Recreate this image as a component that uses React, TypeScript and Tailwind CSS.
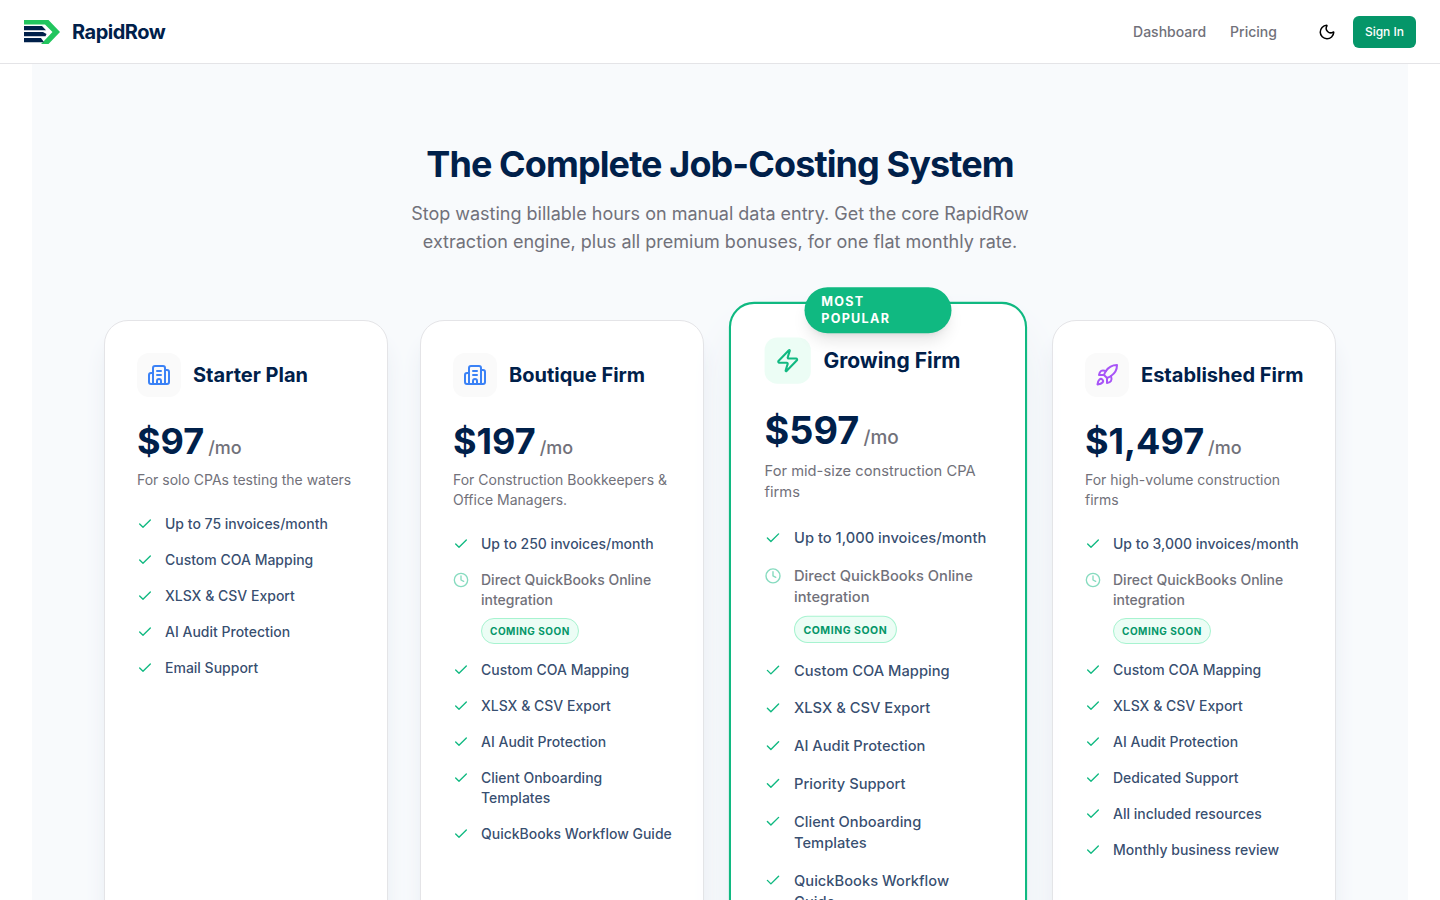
import { Building2, Check, Clock, Moon, Rocket, Zap, type LucideIcon } from 'lucide-react';
import clsx from 'clsx';

type Feature = { label: string; soon?: boolean };

type Plan = {
  name: string;
  price: string;
  description: string;
  icon: LucideIcon;
  iconClass: string;
  tileClass: string;
  popular?: boolean;
  features: Feature[];
};

const quickbooks: Feature = { label: 'Direct QuickBooks Online integration', soon: true };

const plans: Plan[] = [
  {
    name: 'Starter Plan',
    price: '$97',
    description: 'For solo CPAs testing the waters',
    icon: Building2,
    iconClass: 'text-[#3b82f6]',
    tileClass: 'bg-[#fafafa]',
    features: [
      { label: 'Up to 75 invoices/month' },
      { label: 'Custom COA Mapping' },
      { label: 'XLSX & CSV Export' },
      { label: 'AI Audit Protection' },
      { label: 'Email Support' },
    ],
  },
  {
    name: 'Boutique Firm',
    price: '$197',
    description: 'For Construction Bookkeepers & Office Managers.',
    icon: Building2,
    iconClass: 'text-[#3b82f6]',
    tileClass: 'bg-[#fafafa]',
    features: [
      { label: 'Up to 250 invoices/month' },
      quickbooks,
      { label: 'Custom COA Mapping' },
      { label: 'XLSX & CSV Export' },
      { label: 'AI Audit Protection' },
      { label: 'Client Onboarding Templates' },
      { label: 'QuickBooks Workflow Guide' },
    ],
  },
  {
    name: 'Growing Firm',
    price: '$597',
    description: 'For mid-size construction CPA firms',
    icon: Zap,
    iconClass: 'text-[#10b981]',
    tileClass: 'bg-[#ecfdf5]',
    popular: true,
    features: [
      { label: 'Up to 1,000 invoices/month' },
      quickbooks,
      { label: 'Custom COA Mapping' },
      { label: 'XLSX & CSV Export' },
      { label: 'AI Audit Protection' },
      { label: 'Priority Support' },
      { label: 'Client Onboarding Templates' },
      { label: 'QuickBooks Workflow Guide' },
    ],
  },
  {
    name: 'Established Firm',
    price: '$1,497',
    description: 'For high-volume construction firms',
    icon: Rocket,
    iconClass: 'text-[#a855f7]',
    tileClass: 'bg-[#fafafa]',
    features: [
      { label: 'Up to 3,000 invoices/month' },
      quickbooks,
      { label: 'Custom COA Mapping' },
      { label: 'XLSX & CSV Export' },
      { label: 'AI Audit Protection' },
      { label: 'Dedicated Support' },
      { label: 'All included resources' },
      { label: 'Monthly business review' },
    ],
  },
];

function Logo() {
  return (
    <svg width="36" height="24" viewBox="0 0 36 24" aria-hidden="true">
      <path d="M0 0h24.5L36 12 24.5 24H17l2.5-2.5L28.5 12 21 4.4H0z" fill="#22c55e" />
      <path d="M0 6h18l4 4.3H0z" fill="#00204a" />
      <path d="M0 12h19l3.5 2-1 2.3H0z" fill="#00204a" />
      <path d="M0 18h17l3 4.3H0z" fill="#00204a" />
    </svg>
  );
}

function Navbar() {
  return (
    <header className="h-16 border-b border-[#e4e4e7] bg-white">
      <div className="flex h-full items-center justify-between px-6">
        <a href="#" className="flex items-center gap-3">
          <Logo />
          <span className="text-xl font-bold tracking-tight text-[#00204a]">RapidRow</span>
        </a>
        <div className="flex items-center gap-8">
          <nav className="flex items-center gap-6 text-sm font-medium text-[#71717a]">
            <a href="#">Dashboard</a>
            <a href="#">Pricing</a>
          </nav>
          <div className="flex items-center gap-2">
            <button type="button" aria-label="Toggle theme" className="flex size-9 items-center justify-center text-black">
              <Moon size={18} />
            </button>
            <button type="button" className="h-8 rounded-md bg-[#059669] px-3 text-xs font-medium text-white">
              Sign In
            </button>
          </div>
        </div>
      </div>
    </header>
  );
}

function FeatureItem({ label, soon }: Feature) {
  return (
    <li className="flex items-start gap-3">
      {soon ? (
        <Clock size={16} className="mt-0.5 shrink-0 text-[#10b981] opacity-50" />
      ) : (
        <Check size={16} className="mt-0.5 shrink-0 text-[#10b981]" />
      )}
      <div className="flex flex-col items-start gap-2">
        <span className={clsx('text-sm font-medium', soon ? 'text-[#71717a]' : 'text-[#00204a]/80')}>{label}</span>
        {soon && (
          <span className="rounded-full border border-[#a7f3d0] bg-[#ecfdf5] px-2 py-1 text-[10px] leading-4 font-bold tracking-wider text-[#059669] uppercase">
            Coming Soon
          </span>
        )}
      </div>
    </li>
  );
}

function PlanCard({ plan }: { plan: Plan }) {
  const Icon = plan.icon;
  return (
    <div
      className={clsx(
        'relative flex flex-col rounded-3xl bg-white py-8 pl-8',
        plan.popular
          ? 'z-10 scale-105 border-2 border-[#10b981] pr-8 shadow-2xl shadow-slate-200'
          : 'border border-[#e4e4e7] pr-7 shadow-xl shadow-slate-200'
      )}
    >
      {plan.popular && (
        <div className="absolute -top-4 left-1/2 -translate-x-1/2 rounded-full bg-[#10b981] px-4 py-1.5 text-xs font-bold tracking-widest text-white uppercase shadow-lg">
          Most Popular
        </div>
      )}
      <div className="mb-6 flex items-center gap-3">
        <div className={clsx('rounded-xl p-2.5', plan.tileClass)}>
          <Icon size={24} className={plan.iconClass} />
        </div>
        <h3 className="text-xl font-bold text-[#00204a]">{plan.name}</h3>
      </div>
      <div className="flex items-baseline gap-1">
        <span className="text-4xl font-bold text-[#00204a]">{plan.price}</span>
        <span className="text-lg font-medium text-[#71717a]">/mo</span>
      </div>
      <p className="mt-2 text-sm text-[#71717a]">{plan.description}</p>
      <ul className="mt-6 mb-16 flex flex-1 flex-col gap-4">
        {plan.features.map((feature) => (
          <FeatureItem key={feature.label} {...feature} />
        ))}
      </ul>
      <button
        type="button"
        className={clsx(
          'h-12 w-full rounded-xl text-sm font-bold',
          plan.popular ? 'bg-[#10b981] text-white' : 'bg-slate-100 text-[#00204a]'
        )}
      >
        Get Started
      </button>
    </div>
  );
}

export default function App() {
  return (
    <div className="min-h-screen bg-white font-['Inter',sans-serif]">
      <Navbar />
      <main className="px-8">
        <section className="bg-[#f8fafc] py-20">
          <div className="mx-auto max-w-7xl px-6">
            <div className="mx-auto mb-16 max-w-2xl text-center">
              <h1 className="mb-4 text-4xl font-bold tracking-tight text-[#00204a]">The Complete Job-Costing System</h1>
              <p className="text-lg text-[#71717a]">
                Stop wasting billable hours on manual data entry. Get the core RapidRow extraction engine, plus all
                premium bonuses, for one flat monthly rate.
              </p>
            </div>
            <div className="grid grid-cols-1 gap-8 md:grid-cols-2 lg:grid-cols-4">
              {plans.map((plan) => (
                <PlanCard key={plan.name} plan={plan} />
              ))}
            </div>
          </div>
        </section>
      </main>
    </div>
  );
}
